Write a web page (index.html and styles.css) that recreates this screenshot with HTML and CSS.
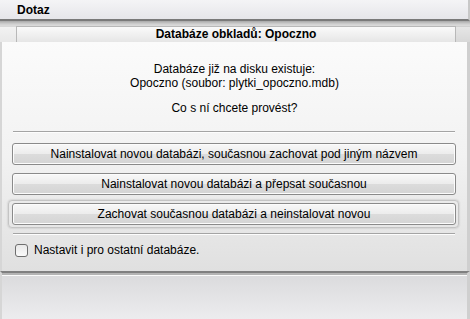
FILE: index.html
```html
<!DOCTYPE html>
<html>
<head>
<meta charset="utf-8">
<link rel="stylesheet" href="styles.css">
</head>
<body>
<div class="window">
  <div class="titlebar"><span class="title">Dotaz</span></div>
  <div class="tabrow">
    <div class="tab-left"></div>
    <div class="tab">Databáze obkladů: Opoczno</div>
    <div class="tab-right"></div>
  </div>
  <div class="panel">
    <div class="message">
      <div>Databáze již na disku existuje:</div>
      <div>Opoczno (soubor: plytki_opoczno.mdb)</div>
      <div class="question">Co s ní chcete provést?</div>
    </div>
    <div class="sep"></div>
    <div class="buttons">
      <div class="btn-wrap"><button class="btn">Nainstalovat novou databázi, současnou zachovat pod jiným názvem</button></div>
      <div class="btn-wrap"><button class="btn">Nainstalovat novou databázi a přepsat současnou</button></div>
      <div class="btn-wrap focus"><button class="btn">Zachovat současnou databázi a neinstalovat novou</button></div>
    </div>
    <div class="sep sep2"></div>
    <label class="check"><span class="box"></span><span>Nastavit i pro ostatní databáze.</span></label>
  </div>
  <div class="footer"></div>
</div>
</body>
</html>
```
FILE: styles.css
```css
* { box-sizing: border-box; }
html, body { margin: 0; padding: 0; }
body {
  width: 470px;
  height: 319px;
  overflow: hidden;
  font-family: "Liberation Sans", Arial, sans-serif;
  font-size: 12px;
  color: #000;
  background: #e4e4e4;
}
.window { display: flex; flex-direction: column; height: 319px; }
.titlebar {
  height: 21px;
  background: linear-gradient(#f4f4f6, #e6e6ea);
  border-bottom: 2px solid #7a7a7a;
  border-right: 2px solid #c8c8c8;
  padding-left: 17px;
  display: flex;
  align-items: center;
}
.title { font-weight: bold; font-size: 12px; }
.tabrow {
  display: flex;
  height: 21px;
  padding-top: 5px;
  background: linear-gradient(#a8a8a8 0, #d0d0d0 3px, #dcdcdc 5px);
}
.tab-left {
  width: 16px;
  background: linear-gradient(#f2f2f2, #e8e8e8);
  border-top: 1px solid #d8d8d8;
}
.tab {
  flex: 1;
  text-align: center;
  font-weight: bold;
  font-size: 12px;
  line-height: 15px;
  background: linear-gradient(#fafafa, #e6e6e6);
  border: 1px solid #b8b8b8;
  border-bottom: none;
}
.tab-right {
  width: 14px;
  background: linear-gradient(#e6e6e6, #d8d8d8);
  border-top: 1px solid #d0d0d0;
}
.panel {
  height: 229px;
  background: linear-gradient(#fbfbfb 0, #f2f2f2 50%, #e0e0e0 100%);
  border-left: 2px solid #d6d6d6;
  border-right: 3px solid #cfcfcf;
  display: flex;
  flex-direction: column;
  padding: 20px 8px 0 6px;
}
.message {
  text-align: center;
  line-height: 14px;
  font-size: 12px;
  padding-left: 2px;
}
.question { margin-top: 11px; }
.sep {
  margin: 16px 4px 0 5px;
  height: 2px;
  border-top: 1px solid #a4a4a4;
  border-bottom: 1px solid #fdfdfd;
}
.buttons { display: flex; flex-direction: column; gap: 2px; margin-top: 7px; }
.btn-wrap { padding: 3px 3px 3px 4px; border-radius: 4px; }
.btn-wrap.focus {
  border: 1px solid #c4c4c4;
  padding: 2px 2px 2px 3px;
  box-shadow: 0 0 2px #b0b0b0;
}
.btn {
  display: block;
  width: 100%;
  height: 22px;
  font-family: "Liberation Sans", Arial, sans-serif;
  font-size: 12px;
  color: #000;
  border: 1px solid #8a8a8a;
  border-radius: 3px;
  background: linear-gradient(#f8f8f8 0, #ececec 50%, #dcdcdc 51%, #d4d4d4 100%);
  box-shadow: inset 0 0 0 1px #fcfcfc;
  padding: 0;
}
.sep2 { margin-top: 5px; }
.check {
  display: flex;
  align-items: center;
  gap: 6px;
  margin-top: 8px;
  padding-left: 7px;
}
.box {
  width: 13px;
  height: 13px;
  border: 1px solid #6e6e6e;
  border-radius: 3px;
  background: linear-gradient(#e8e8e8, #fafafa);
}
.footer {
  flex: 1;
  border-top: 2px solid #808080;
  box-shadow: inset 0 2px 0 #b4b4b4, inset 0 3px 0 #fafafa;
  border-right: 3px solid #cfcfcf;
  border-left: 2px solid #d6d6d6;
  background: linear-gradient(#dadadc, #ececee);
}
```
